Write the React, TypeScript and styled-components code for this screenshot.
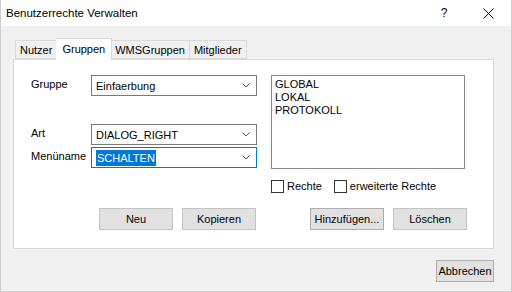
import styled, { createGlobalStyle } from 'styled-components';

const GlobalStyle = createGlobalStyle`
  html, body {
    margin: 0;
    padding: 0;
    background: #ffffff;
  }
  body {
    font-family: "Liberation Sans", Arial, sans-serif;
    font-size: 11px;
    color: #000000;
  }
`;

const Window = styled.div`
  width: 512px;
  height: 292px;
  box-sizing: border-box;
  border: 1px solid #cccccc;
  border-top: none;
  background: #f0f0f0;
  display: flex;
  flex-direction: column;
`;

const TitleBar = styled.div`
  height: 26px;
  background: #ffffff;
  display: flex;
  align-items: center;
  padding-left: 5px;
  font-size: 11.5px;
`;

const Title = styled.div`
  flex: 1;
  padding-bottom: 1px;
`;

const TitleButton = styled.div<{ $width: number; $gap?: number }>`
  width: ${({ $width }) => $width}px;
  margin-right: ${({ $gap }) => $gap ?? 0}px;
  height: 26px;
  display: flex;
  align-items: center;
  justify-content: center;
  font-size: 12px;
`;

const Body = styled.div`
  flex: 1;
  display: flex;
  flex-direction: column;
  padding: 12px 17px 0 12px;
`;

const TabStrip = styled.div`
  display: flex;
  align-items: flex-end;
  height: 21px;
  padding-left: 2px;
  position: relative;
  z-index: 1;
`;

const Tab = styled.div<{ $active?: boolean }>`
  box-sizing: border-box;
  height: ${({ $active }) => ($active ? 22 : 19)}px;
  margin-bottom: ${({ $active }) => ($active ? -1 : 0)}px;
  padding: 0 ${({ $active }) => ($active ? 6 : 4)}px;
  margin-left: ${({ $active }) => ($active ? -1 : 0)}px;
  margin-right: ${({ $active }) => ($active ? -1 : 0)}px;
  background: ${({ $active }) => ($active ? '#ffffff' : '#f0f0f0')};
  border: 1px solid #d9d9d9;
  border-bottom: ${({ $active }) => ($active ? 'none' : '1px solid #d9d9d9')};
  display: flex;
  align-items: center;
  padding-bottom: ${({ $active }) => ($active ? 2 : 0)}px;
  z-index: ${({ $active }) => ($active ? 2 : 1)};
  font-size: 11px;
  & + & {
    border-left: none;
  }
`;

const Panel = styled.div`
  box-sizing: border-box;
  width: 481px;
  height: 190px;
  background: #ffffff;
  border: 1px solid #d9d9d9;
  padding: 15px 0 0 17px;
  display: flex;
  flex-direction: column;
`;

const TopArea = styled.div`
  display: flex;
  gap: 14px;
  height: 118px;
`;

const Form = styled.div`
  display: grid;
  grid-template-columns: 60px 166px;
  grid-template-rows: 21px 21px 21px;
  row-gap: 2px;
  align-content: start;
`;

const Label = styled.div<{ $gap?: number }>`
  padding-top: 3px;
  font-size: 11px;
  margin-top: ${({ $gap }) => $gap ?? 0}px;
`;

const Combo = styled.div<{ $focused?: boolean; $gap?: number }>`
  box-sizing: border-box;
  height: 21px;
  margin-top: ${({ $gap }) => $gap ?? 0}px;
  border: 1px solid ${({ $focused }) => ($focused ? '#0078d7' : '#7a7a7a')};
  display: flex;
  align-items: center;
  padding-left: 4px;
  font-size: 11px;
`;

const ComboText = styled.span`
  flex: 1;
  & > mark {
    background: #0078d7;
    color: #ffffff;
    padding: 2px 1px;
  }
`;

const Chevron = styled.svg`
  width: 8px;
  height: 5px;
  margin-right: 6px;
`;

const RightCol = styled.div`
  display: flex;
  flex-direction: column;
  gap: 10px;
`;

const ListBox = styled.div`
  box-sizing: border-box;
  width: 194px;
  height: 94px;
  border: 1px solid #828790;
  padding: 2px 3px;
  display: flex;
  flex-direction: column;
`;

const ListItem = styled.div`
  height: 13px;
  line-height: 13px;
  font-size: 11px;
`;

const CheckRow = styled.div`
  display: flex;
  align-items: center;
  gap: 3px;
  height: 14px;
`;

const CheckBox = styled.span`
  box-sizing: border-box;
  width: 13px;
  height: 13px;
  border: 1px solid #333333;
  background: #ffffff;
`;

const CheckLabel = styled.span`
  font-size: 11px;
  margin-right: 9px;
`;

const ButtonRow = styled.div`
  display: flex;
  padding-left: 68px;
  margin-top: 15px;
`;

const ButtonGroup = styled.div<{ $offset?: number }>`
  display: flex;
  gap: 9px;
  margin-left: ${({ $offset }) => $offset ?? 0}px;
`;

const Button = styled.button<{ $width: number; $height?: number; $dark?: boolean }>`
  box-sizing: border-box;
  width: ${({ $width }) => $width}px;
  height: ${({ $height }) => $height ?? 22}px;
  background: #e1e1e1;
  border: 1px solid ${({ $dark }) => ($dark ? '#adadad' : '#c4c4c4')};
  font-family: "Liberation Sans", Arial, sans-serif;
  font-size: 11px;
  color: #000000;
  padding: 0;
  white-space: nowrap;
`;

const Footer = styled.div`
  display: flex;
  justify-content: flex-end;
  margin-top: 11px;
`;

const ChevronIcon = () => (
  <Chevron viewBox="0 0 8 5">
    <path d="M0.5 0.5 L4 4 L7.5 0.5" fill="none" stroke="#555555" strokeWidth="1" />
  </Chevron>
);

export default function App() {
  return (
    <>
      <GlobalStyle />
      <Window>
        <TitleBar>
          <Title>Benutzerrechte Verwalten</Title>
          <TitleButton $width={28} $gap={7}>?</TitleButton>
          <TitleButton $width={46}>
            <svg width="11" height="11" viewBox="0 0 11 11">
              <path d="M0.5 0.5 L10.5 10.5 M10.5 0.5 L0.5 10.5" stroke="#000000" strokeWidth="1" />
            </svg>
          </TitleButton>
        </TitleBar>
        <Body>
          <TabStrip>
            <Tab>Nutzer</Tab>
            <Tab $active>Gruppen</Tab>
            <Tab>WMSGruppen</Tab>
            <Tab>Mitglieder</Tab>
          </TabStrip>
          <Panel>
            <TopArea>
              <Form>
                <Label>Gruppe</Label>
                <Combo>
                  <ComboText>Einfaerbung</ComboText>
                  <ChevronIcon />
                </Combo>
                <Label $gap={26}>Art</Label>
                <Combo $gap={26}>
                  <ComboText>DIALOG_RIGHT</ComboText>
                  <ChevronIcon />
                </Combo>
                <Label $gap={26}>Menüname</Label>
                <Combo $gap={26} $focused>
                  <ComboText>
                    <mark>SCHALTEN</mark>
                  </ComboText>
                  <ChevronIcon />
                </Combo>
              </Form>
              <RightCol>
                <ListBox>
                  <ListItem>GLOBAL</ListItem>
                  <ListItem>LOKAL</ListItem>
                  <ListItem>PROTOKOLL</ListItem>
                </ListBox>
                <CheckRow>
                  <CheckBox />
                  <CheckLabel>Rechte</CheckLabel>
                  <CheckBox />
                  <CheckLabel>erweiterte Rechte</CheckLabel>
                </CheckRow>
              </RightCol>
            </TopArea>
            <ButtonRow>
              <ButtonGroup>
                <Button $width={74}>Neu</Button>
                <Button $width={74}>Kopieren</Button>
              </ButtonGroup>
              <ButtonGroup $offset={54}>
                <Button $width={74} $dark>Hinzufügen...</Button>
                <Button $width={74}>Löschen</Button>
              </ButtonGroup>
            </ButtonRow>
          </Panel>
          <Footer>
            <Button $width={58} $height={22} $dark>Abbrechen</Button>
          </Footer>
        </Body>
      </Window>
    </>
  );
}
